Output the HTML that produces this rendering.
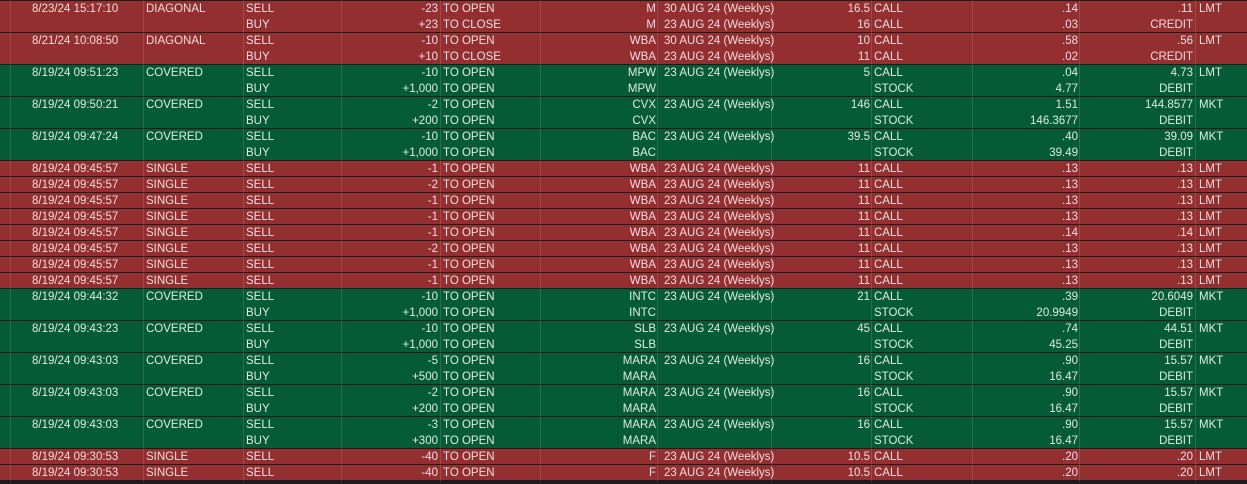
<!DOCTYPE html>
<html><head><meta charset="utf-8"><style>
*{margin:0;padding:0;box-sizing:border-box}
body{width:1247px;height:484px;background:#1c1c1c;overflow:hidden;font-family:"Liberation Sans",sans-serif;font-size:11.5px;padding-top:1px}
.g{border-bottom:1px solid #1e1a1a;position:relative}
.R{background:#932f30;color:#f2dcdc}
.G{background:#065b37;color:#dcece2}
.l{height:15.5px;line-height:15.5px;position:relative;white-space:nowrap}
.g.s .l{height:15px;line-height:15px}
.l span{position:absolute;top:1px}
.a{left:32px}.b{left:146px}.c{left:246px}
.d{right:809px}.e{left:443px}.f{right:591px}.h{left:664px}
.i{right:377px}.j{left:874px}.k{right:169px}.m{right:54px}.n{left:1199px}
.v{position:absolute;top:0;bottom:0;width:1px;background:rgba(255,255,255,0.13)}
</style></head><body>
<div style="position:absolute;top:0;left:0;width:1247px;height:482px;pointer-events:none;z-index:2">
<div class="v" style="left:10px"></div><div class="v" style="left:143px"></div><div class="v" style="left:243px"></div><div class="v" style="left:341px"></div><div class="v" style="left:440px"></div><div class="v" style="left:540px"></div><div class="v" style="left:657px"></div><div class="v" style="left:771px"></div><div class="v" style="left:871px"></div><div class="v" style="left:972px"></div><div class="v" style="left:1079px"></div><div class="v" style="left:1195px"></div>
</div>

<div class="g R"><div class="l"><span class="a">8/23/24 15:17:10</span><span class="b">DIAGONAL</span><span class="c">SELL</span><span class="d">-23</span><span class="e">TO OPEN</span><span class="f">M</span><span class="h">30 AUG 24 (Weeklys)</span><span class="i">16.5</span><span class="j">CALL</span><span class="k">.14</span><span class="m">.11</span><span class="n">LMT</span></div><div class="l"><span class="c">BUY</span><span class="d">+23</span><span class="e">TO CLOSE</span><span class="f">M</span><span class="h">23 AUG 24 (Weeklys)</span><span class="i">16</span><span class="j">CALL</span><span class="k">.03</span><span class="m">CREDIT</span></div></div>

<div class="g R"><div class="l"><span class="a">8/21/24 10:08:50</span><span class="b">DIAGONAL</span><span class="c">SELL</span><span class="d">-10</span><span class="e">TO OPEN</span><span class="f">WBA</span><span class="h">30 AUG 24 (Weeklys)</span><span class="i">10</span><span class="j">CALL</span><span class="k">.58</span><span class="m">.56</span><span class="n">LMT</span></div><div class="l"><span class="c">BUY</span><span class="d">+10</span><span class="e">TO CLOSE</span><span class="f">WBA</span><span class="h">23 AUG 24 (Weeklys)</span><span class="i">11</span><span class="j">CALL</span><span class="k">.02</span><span class="m">CREDIT</span></div></div>

<div class="g G"><div class="l"><span class="a">8/19/24 09:51:23</span><span class="b">COVERED</span><span class="c">SELL</span><span class="d">-10</span><span class="e">TO OPEN</span><span class="f">MPW</span><span class="h">23 AUG 24 (Weeklys)</span><span class="i">5</span><span class="j">CALL</span><span class="k">.04</span><span class="m">4.73</span><span class="n">LMT</span></div><div class="l"><span class="c">BUY</span><span class="d">+1,000</span><span class="e">TO OPEN</span><span class="f">MPW</span><span class="j">STOCK</span><span class="k">4.77</span><span class="m">DEBIT</span></div></div>

<div class="g G"><div class="l"><span class="a">8/19/24 09:50:21</span><span class="b">COVERED</span><span class="c">SELL</span><span class="d">-2</span><span class="e">TO OPEN</span><span class="f">CVX</span><span class="h">23 AUG 24 (Weeklys)</span><span class="i">146</span><span class="j">CALL</span><span class="k">1.51</span><span class="m">144.8577</span><span class="n">MKT</span></div><div class="l"><span class="c">BUY</span><span class="d">+200</span><span class="e">TO OPEN</span><span class="f">CVX</span><span class="j">STOCK</span><span class="k">146.3677</span><span class="m">DEBIT</span></div></div>

<div class="g G"><div class="l"><span class="a">8/19/24 09:47:24</span><span class="b">COVERED</span><span class="c">SELL</span><span class="d">-10</span><span class="e">TO OPEN</span><span class="f">BAC</span><span class="h">23 AUG 24 (Weeklys)</span><span class="i">39.5</span><span class="j">CALL</span><span class="k">.40</span><span class="m">39.09</span><span class="n">MKT</span></div><div class="l"><span class="c">BUY</span><span class="d">+1,000</span><span class="e">TO OPEN</span><span class="f">BAC</span><span class="j">STOCK</span><span class="k">39.49</span><span class="m">DEBIT</span></div></div>

<div class="g R s"><div class="l"><span class="a">8/19/24 09:45:57</span><span class="b">SINGLE</span><span class="c">SELL</span><span class="d">-1</span><span class="e">TO OPEN</span><span class="f">WBA</span><span class="h">23 AUG 24 (Weeklys)</span><span class="i">11</span><span class="j">CALL</span><span class="k">.13</span><span class="m">.13</span><span class="n">LMT</span></div></div>
<div class="g R s"><div class="l"><span class="a">8/19/24 09:45:57</span><span class="b">SINGLE</span><span class="c">SELL</span><span class="d">-2</span><span class="e">TO OPEN</span><span class="f">WBA</span><span class="h">23 AUG 24 (Weeklys)</span><span class="i">11</span><span class="j">CALL</span><span class="k">.13</span><span class="m">.13</span><span class="n">LMT</span></div></div>
<div class="g R s"><div class="l"><span class="a">8/19/24 09:45:57</span><span class="b">SINGLE</span><span class="c">SELL</span><span class="d">-1</span><span class="e">TO OPEN</span><span class="f">WBA</span><span class="h">23 AUG 24 (Weeklys)</span><span class="i">11</span><span class="j">CALL</span><span class="k">.13</span><span class="m">.13</span><span class="n">LMT</span></div></div>
<div class="g R s"><div class="l"><span class="a">8/19/24 09:45:57</span><span class="b">SINGLE</span><span class="c">SELL</span><span class="d">-1</span><span class="e">TO OPEN</span><span class="f">WBA</span><span class="h">23 AUG 24 (Weeklys)</span><span class="i">11</span><span class="j">CALL</span><span class="k">.13</span><span class="m">.13</span><span class="n">LMT</span></div></div>
<div class="g R s"><div class="l"><span class="a">8/19/24 09:45:57</span><span class="b">SINGLE</span><span class="c">SELL</span><span class="d">-1</span><span class="e">TO OPEN</span><span class="f">WBA</span><span class="h">23 AUG 24 (Weeklys)</span><span class="i">11</span><span class="j">CALL</span><span class="k">.14</span><span class="m">.14</span><span class="n">LMT</span></div></div>
<div class="g R s"><div class="l"><span class="a">8/19/24 09:45:57</span><span class="b">SINGLE</span><span class="c">SELL</span><span class="d">-2</span><span class="e">TO OPEN</span><span class="f">WBA</span><span class="h">23 AUG 24 (Weeklys)</span><span class="i">11</span><span class="j">CALL</span><span class="k">.13</span><span class="m">.13</span><span class="n">LMT</span></div></div>
<div class="g R s"><div class="l"><span class="a">8/19/24 09:45:57</span><span class="b">SINGLE</span><span class="c">SELL</span><span class="d">-1</span><span class="e">TO OPEN</span><span class="f">WBA</span><span class="h">23 AUG 24 (Weeklys)</span><span class="i">11</span><span class="j">CALL</span><span class="k">.13</span><span class="m">.13</span><span class="n">LMT</span></div></div>
<div class="g R s"><div class="l"><span class="a">8/19/24 09:45:57</span><span class="b">SINGLE</span><span class="c">SELL</span><span class="d">-1</span><span class="e">TO OPEN</span><span class="f">WBA</span><span class="h">23 AUG 24 (Weeklys)</span><span class="i">11</span><span class="j">CALL</span><span class="k">.13</span><span class="m">.13</span><span class="n">LMT</span></div></div>

<div class="g G"><div class="l"><span class="a">8/19/24 09:44:32</span><span class="b">COVERED</span><span class="c">SELL</span><span class="d">-10</span><span class="e">TO OPEN</span><span class="f">INTC</span><span class="h">23 AUG 24 (Weeklys)</span><span class="i">21</span><span class="j">CALL</span><span class="k">.39</span><span class="m">20.6049</span><span class="n">MKT</span></div><div class="l"><span class="c">BUY</span><span class="d">+1,000</span><span class="e">TO OPEN</span><span class="f">INTC</span><span class="j">STOCK</span><span class="k">20.9949</span><span class="m">DEBIT</span></div></div>

<div class="g G"><div class="l"><span class="a">8/19/24 09:43:23</span><span class="b">COVERED</span><span class="c">SELL</span><span class="d">-10</span><span class="e">TO OPEN</span><span class="f">SLB</span><span class="h">23 AUG 24 (Weeklys)</span><span class="i">45</span><span class="j">CALL</span><span class="k">.74</span><span class="m">44.51</span><span class="n">MKT</span></div><div class="l"><span class="c">BUY</span><span class="d">+1,000</span><span class="e">TO OPEN</span><span class="f">SLB</span><span class="j">STOCK</span><span class="k">45.25</span><span class="m">DEBIT</span></div></div>

<div class="g G"><div class="l"><span class="a">8/19/24 09:43:03</span><span class="b">COVERED</span><span class="c">SELL</span><span class="d">-5</span><span class="e">TO OPEN</span><span class="f">MARA</span><span class="h">23 AUG 24 (Weeklys)</span><span class="i">16</span><span class="j">CALL</span><span class="k">.90</span><span class="m">15.57</span><span class="n">MKT</span></div><div class="l"><span class="c">BUY</span><span class="d">+500</span><span class="e">TO OPEN</span><span class="f">MARA</span><span class="j">STOCK</span><span class="k">16.47</span><span class="m">DEBIT</span></div></div>

<div class="g G"><div class="l"><span class="a">8/19/24 09:43:03</span><span class="b">COVERED</span><span class="c">SELL</span><span class="d">-2</span><span class="e">TO OPEN</span><span class="f">MARA</span><span class="h">23 AUG 24 (Weeklys)</span><span class="i">16</span><span class="j">CALL</span><span class="k">.90</span><span class="m">15.57</span><span class="n">MKT</span></div><div class="l"><span class="c">BUY</span><span class="d">+200</span><span class="e">TO OPEN</span><span class="f">MARA</span><span class="j">STOCK</span><span class="k">16.47</span><span class="m">DEBIT</span></div></div>

<div class="g G"><div class="l"><span class="a">8/19/24 09:43:03</span><span class="b">COVERED</span><span class="c">SELL</span><span class="d">-3</span><span class="e">TO OPEN</span><span class="f">MARA</span><span class="h">23 AUG 24 (Weeklys)</span><span class="i">16</span><span class="j">CALL</span><span class="k">.90</span><span class="m">15.57</span><span class="n">MKT</span></div><div class="l"><span class="c">BUY</span><span class="d">+300</span><span class="e">TO OPEN</span><span class="f">MARA</span><span class="j">STOCK</span><span class="k">16.47</span><span class="m">DEBIT</span></div></div>

<div class="g R s"><div class="l"><span class="a">8/19/24 09:30:53</span><span class="b">SINGLE</span><span class="c">SELL</span><span class="d">-40</span><span class="e">TO OPEN</span><span class="f">F</span><span class="h">23 AUG 24 (Weeklys)</span><span class="i">10.5</span><span class="j">CALL</span><span class="k">.20</span><span class="m">.20</span><span class="n">LMT</span></div></div>
<div class="g R s"><div class="l"><span class="a">8/19/24 09:30:53</span><span class="b">SINGLE</span><span class="c">SELL</span><span class="d">-40</span><span class="e">TO OPEN</span><span class="f">F</span><span class="h">23 AUG 24 (Weeklys)</span><span class="i">10.5</span><span class="j">CALL</span><span class="k">.20</span><span class="m">.20</span><span class="n">LMT</span></div></div>
</body></html>
